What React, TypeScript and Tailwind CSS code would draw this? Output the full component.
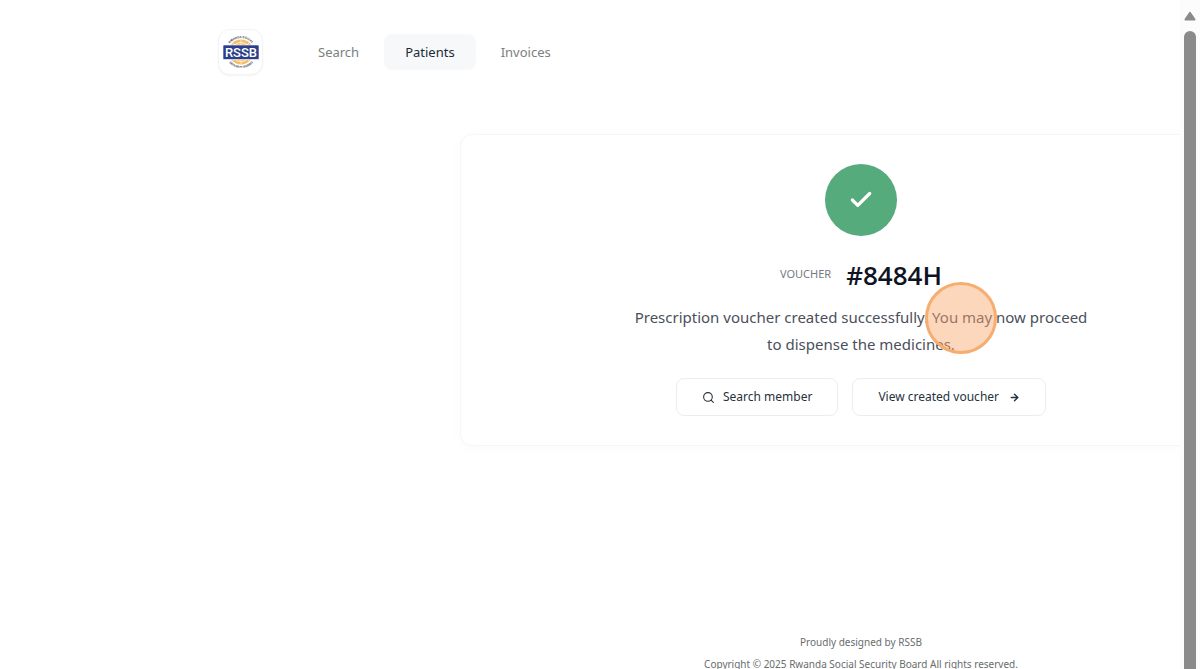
import React from 'react';
import { ArrowRight, Check, Search } from 'lucide-react';

const navItems = [
  { label: 'Search', active: false },
  { label: 'Patients', active: true },
  { label: 'Invoices', active: false },
];

const RssbLogo: React.FC = () => (
  <svg viewBox="0 0 40 40" className="h-10 w-10" role="img" aria-label="RSSB">
    <defs>
      <path id="ring-top" d="M6 20a14 14 0 0 1 28 0" />
      <path id="ring-bottom" d="M4 20a16 16 0 0 0 32 0" />
    </defs>
    <circle cx="20" cy="20" r="12.5" fill="#f4bd68" />
    <circle cx="20" cy="20" r="9.5" fill="none" stroke="#fff3dc" strokeWidth="1" />
    <path d="M20 8v24M12 11l16 18M28 11L12 29" stroke="#fff3dc" strokeWidth="0.8" />
    <g fill="#3a3f58" fontFamily="Liberation Sans, sans-serif" fontSize="3" fontWeight="700" textAnchor="middle">
      <text>
        <textPath href="#ring-top" startOffset="50%">RWANDA SOCIAL</textPath>
      </text>
      <text>
        <textPath href="#ring-bottom" startOffset="50%">SECURITY BOARD</textPath>
      </text>
    </g>
    <rect x="2" y="13" width="36" height="14.5" rx="1" fill="#2b3f8c" stroke="#fff" strokeWidth="0.6" />
    <text x="20" y="24.9" fill="#fff" fontFamily="Roboto, sans-serif" fontSize="13" fontWeight="500" textAnchor="middle">
      RSSB
    </text>
  </svg>
);

const Header: React.FC = () => (
  <header className="flex items-center gap-[34px] pt-[29px]">
    <a href="#home" className="flex h-[46px] w-[45px] items-center justify-center rounded-xl border border-gray-100 bg-white shadow-xs">
      <RssbLogo />
    </a>
    <nav className="flex gap-1">
      {navItems.map((item) => (
        <a
          key={item.label}
          href={`#${item.label.toLowerCase()}`}
          aria-current={item.active ? 'page' : undefined}
          className={`rounded-lg px-[21px] py-2 text-[13px] leading-5 ${
            item.active ? 'bg-[#f6f8fa] text-[#1d2b38]' : 'text-[#7b8080]'
          }`}
        >
          {item.label}
        </a>
      ))}
    </nav>
  </header>
);

const buttonClass =
  'flex h-[38px] items-center rounded-lg border border-[#ededee] bg-white px-[25px] text-xs text-[#26323c]';

const VoucherCard: React.FC = () => (
  <section className="mx-auto flex w-[802px] flex-col items-center rounded-xl border border-[#f6f6f6] bg-white py-[29px] shadow-[0_2px_14px_rgba(0,0,0,0.025)]">
    <div className="flex h-[72px] w-[72px] items-center justify-center rounded-full bg-[#56ab7c] text-white">
      <Check size={26} strokeWidth={3} />
    </div>
    <h1 className="mt-[19px] flex items-center gap-[15px]">
      <span className="pb-0.5 text-[11px] font-normal text-[#737b80]">VOUCHER</span>
      <span className="font-['Open_Sans',sans-serif] text-[26px] leading-10 font-semibold text-[#0f1424]">#8484H</span>
    </h1>
    <div className="relative mt-[9px] w-[464px]">
      <p className="text-center text-[15px] leading-[27px] text-[#4a505b]">
        Prescription voucher created successfully. You may now proceed to dispense the medicines.
      </p>
      <span className="absolute -top-[22px] left-[296px] h-[72px] w-[72px] rounded-full border-3 border-[#f6ad70] bg-[#fba76a]/45" />
    </div>
    <div className="mt-5 flex gap-[14px]">
      <button type="button" className={`${buttonClass} gap-2`}>
        <Search size={13} />
        Search member
      </button>
      <button type="button" className={`${buttonClass} gap-[10px]`}>
        View created voucher
        <ArrowRight size={11} strokeWidth={3} />
      </button>
    </div>
  </section>
);

const Scrollbar: React.FC = () => (
  <div className="flex w-5 shrink-0 flex-col items-center bg-[#fcfcfc] pt-[11px]" aria-hidden="true">
    <svg width="12" height="10" viewBox="0 0 13 10" className="shrink-0">
      <path d="M6.5 1.5 11.5 8.8h-10Z" fill="#8a8a8a" stroke="#8a8a8a" strokeWidth="2" strokeLinejoin="round" />
    </svg>
    <div className="mt-[10px] w-3 flex-1 rounded-t-full bg-[#8a8a8a]" />
  </div>
);

const App: React.FC = () => (
  <div className="flex h-screen overflow-hidden bg-white font-['Noto_Sans',sans-serif]">
    <div className="min-w-0 flex-1 overflow-hidden">
      <div className="flex min-w-[1722px] flex-col px-[218px]">
        <Header />
        <main className="pt-[59px]">
          <VoucherCard />
        </main>
        <footer className="pt-[185px] text-center text-[10px] leading-[22px] text-[#686d6d]">
          <p>Proudly designed by RSSB</p>
          <p>Copyright © 2025 Rwanda Social Security Board All rights reserved.</p>
        </footer>
      </div>
    </div>
    <Scrollbar />
  </div>
);

export default App;
